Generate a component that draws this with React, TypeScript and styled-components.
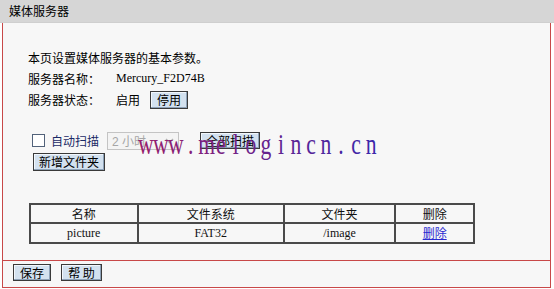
import React from "react";
import styled, { createGlobalStyle } from "styled-components";

const Global = createGlobalStyle`
  html, body { margin: 0; padding: 0; background: #ffffff; }
  body { font-family: "Liberation Serif", "Noto Sans CJK SC", serif; font-size: 12px; color: #000; }
`;

const Page = styled.div`
  position: relative;
  width: 554px;
  height: 289px;
  overflow: hidden;
  background: #ffffff;
`;

const Header = styled.div`
  height: 22px;
  line-height: 22px;
  padding-left: 9px;
  background: #d6d6d6;
  border-bottom: 1px solid #cfcfcf;
  font-family: "Noto Sans CJK SC", sans-serif;
  font-size: 12px;
  color: #000;
`;

const Panel = styled.div`
  margin-left: 2px;
  width: 547px;
  height: 264px;
  border: 1px solid #c84848;
  border-top: none;
  background: #f7f7f7;
  display: flex;
  flex-direction: column;
`;

const Main = styled.div`
  height: 237px;
  padding: 24px 0 0 25px;
  box-sizing: border-box;
  display: flex;
  flex-direction: column;
`;

const Line = styled.div`
  height: 21px;
  display: flex;
  align-items: center;
  font-family: "Liberation Serif", "Noto Sans CJK SC", serif;
  white-space: nowrap;
`;

const Label = styled.span`
  width: 88px;
  flex: none;
`;

const Value = styled.span`
  margin-right: 10px;
`;

const Button = styled.button<{ $w: number; $h?: number }>`
  box-sizing: border-box;
  height: ${(p) => p.$h ?? 17}px;
  width: ${(p) => p.$w}px;
  padding: 0;
  margin: 0;
  border: 1px solid #3a3a3a;
  box-shadow: inset -1px -1px #8ea2b8, inset 1px 1px #f2f7fc;
  background: #d3e1ef;
  font-family: "Noto Sans CJK SC", sans-serif;
  font-size: 12px;
  line-height: 14px;
  color: #000;
  white-space: nowrap;
`;

const ScanRow = styled.div`
  margin-top: 21px;
  margin-left: 4px;
  height: 19px;
  display: flex;
  align-items: center;
  font-family: "Noto Sans CJK SC", sans-serif;
`;

const Check = styled.span`
  box-sizing: border-box;
  width: 13px;
  height: 13px;
  border: 1px solid #52627a;
  background: #ffffff;
  margin-right: 6px;
  flex: none;
`;

const ScanLabel = styled.span`
  color: #1b2a66;
  margin-right: 8px;
`;

const FakeSelect = styled.span`
  box-sizing: border-box;
  width: 72px;
  height: 18px;
  border: 1px solid #c4c4c4;
  background: #f4f4f4;
  color: #a6a6a6;
  display: flex;
  align-items: center;
  justify-content: space-between;
  padding: 0 4px;
  margin-right: 21px;
  font-family: "Liberation Sans", "Noto Sans CJK SC", sans-serif;
  font-size: 12px;
`;

const AddRow = styled.div`
  margin-top: 3px;
  margin-left: 5px;
  display: flex;
`;

const Table = styled.table`
  margin-top: 32px;
  margin-left: 1px;
  width: 446px;
  border: 1px solid #4a4a4a;
  border-spacing: 0;
  font-size: 12px;
`;

const Th = styled.td<{ $w: number }>`
  width: ${(p) => p.$w}px;
  height: 17px;
  padding: 0;
  border: 1px solid #4a4a4a;
  text-align: center;
  font-family: "Noto Sans CJK SC", sans-serif;
  color: #111;
`;

const Td = styled.td`
  height: 18px;
  padding: 0;
  border: 1px solid #4a4a4a;
  text-align: center;
  font-family: "Liberation Serif", "Noto Sans CJK SC", serif;
  color: #111;
`;

const DelLink = styled.a`
  color: #2a2ad0;
  text-decoration: underline;
  font-family: "Noto Sans CJK SC", sans-serif;
`;

const Footer = styled.div`
  flex: 1;
  border-top: 1px solid #c84848;
  display: flex;
  align-items: flex-start;
  gap: 10px;
  padding: 3px 0 0 10px;
`;

const Watermark = styled.div`
  position: absolute;
  left: 138px;
  top: 129px;
  font-family: "Liberation Serif", serif;
  font-size: 30px;
  line-height: 30px;
  white-space: nowrap;
  transform: scaleX(0.72);
  transform-origin: left top;
  pointer-events: none;
`;

const WChar = styled.span<{ $c: string }>`
  display: inline-block;
  width: 20.9px;
  text-align: center;
  color: ${(p) => p.$c};
`;

function mix(a: number[], b: number[], t: number) {
  const c = a.map((v, i) => Math.round(v + (b[i] - v) * t));
  return `rgb(${c[0]},${c[1]},${c[2]})`;
}

const Arrow = () => (
  <svg width="9" height="6" viewBox="0 0 9 6">
    <path d="M1 1 L4.5 4.5 L8 1" fill="none" stroke="#b0b0b0" strokeWidth="1.4" />
  </svg>
);

export default function App() {
  const wm = "www.melogincn.cn".split("");
  return (
    <>
      <Global />
      <Page>
        <Header>媒体服务器</Header>
        <Panel>
          <Main>
            <Line>本页设置媒体服务器的基本参数。</Line>
            <Line>
              <Label>服务器名称：</Label>
              <Value>Mercury_F2D74B</Value>
            </Line>
            <Line>
              <Label>服务器状态：</Label>
              <Value>启用</Value>
              <Button $w={38} $h={18}>停用</Button>
            </Line>
            <ScanRow>
              <Check />
              <ScanLabel>自动扫描</ScanLabel>
              <FakeSelect>
                <span>2 小时</span>
                <Arrow />
              </FakeSelect>
              <Button $w={60}>全部扫描</Button>
            </ScanRow>
            <AddRow>
              <Button $w={72} $h={18}>新增文件夹</Button>
            </AddRow>
            <Table>
              <tbody>
                <tr>
                  <Th $w={106}>名称</Th>
                  <Th $w={145}>文件系统</Th>
                  <Th $w={110}>文件夹</Th>
                  <Th $w={77}>删除</Th>
                </tr>
                <tr>
                  <Td>picture</Td>
                  <Td>FAT32</Td>
                  <Td>/image</Td>
                  <Td>
                    <DelLink href="#">删除</DelLink>
                  </Td>
                </tr>
              </tbody>
            </Table>
          </Main>
          <Footer>
            <Button $w={38}>保存</Button>
            <Button $w={41}>帮 助</Button>
          </Footer>
        </Panel>
        <Watermark>
          {wm.map((ch, i) => (
            <WChar key={i} $c={mix([150, 30, 110], [60, 40, 170], i / (wm.length - 1))}>
              {ch}
            </WChar>
          ))}
        </Watermark>
      </Page>
    </>
  );
}
